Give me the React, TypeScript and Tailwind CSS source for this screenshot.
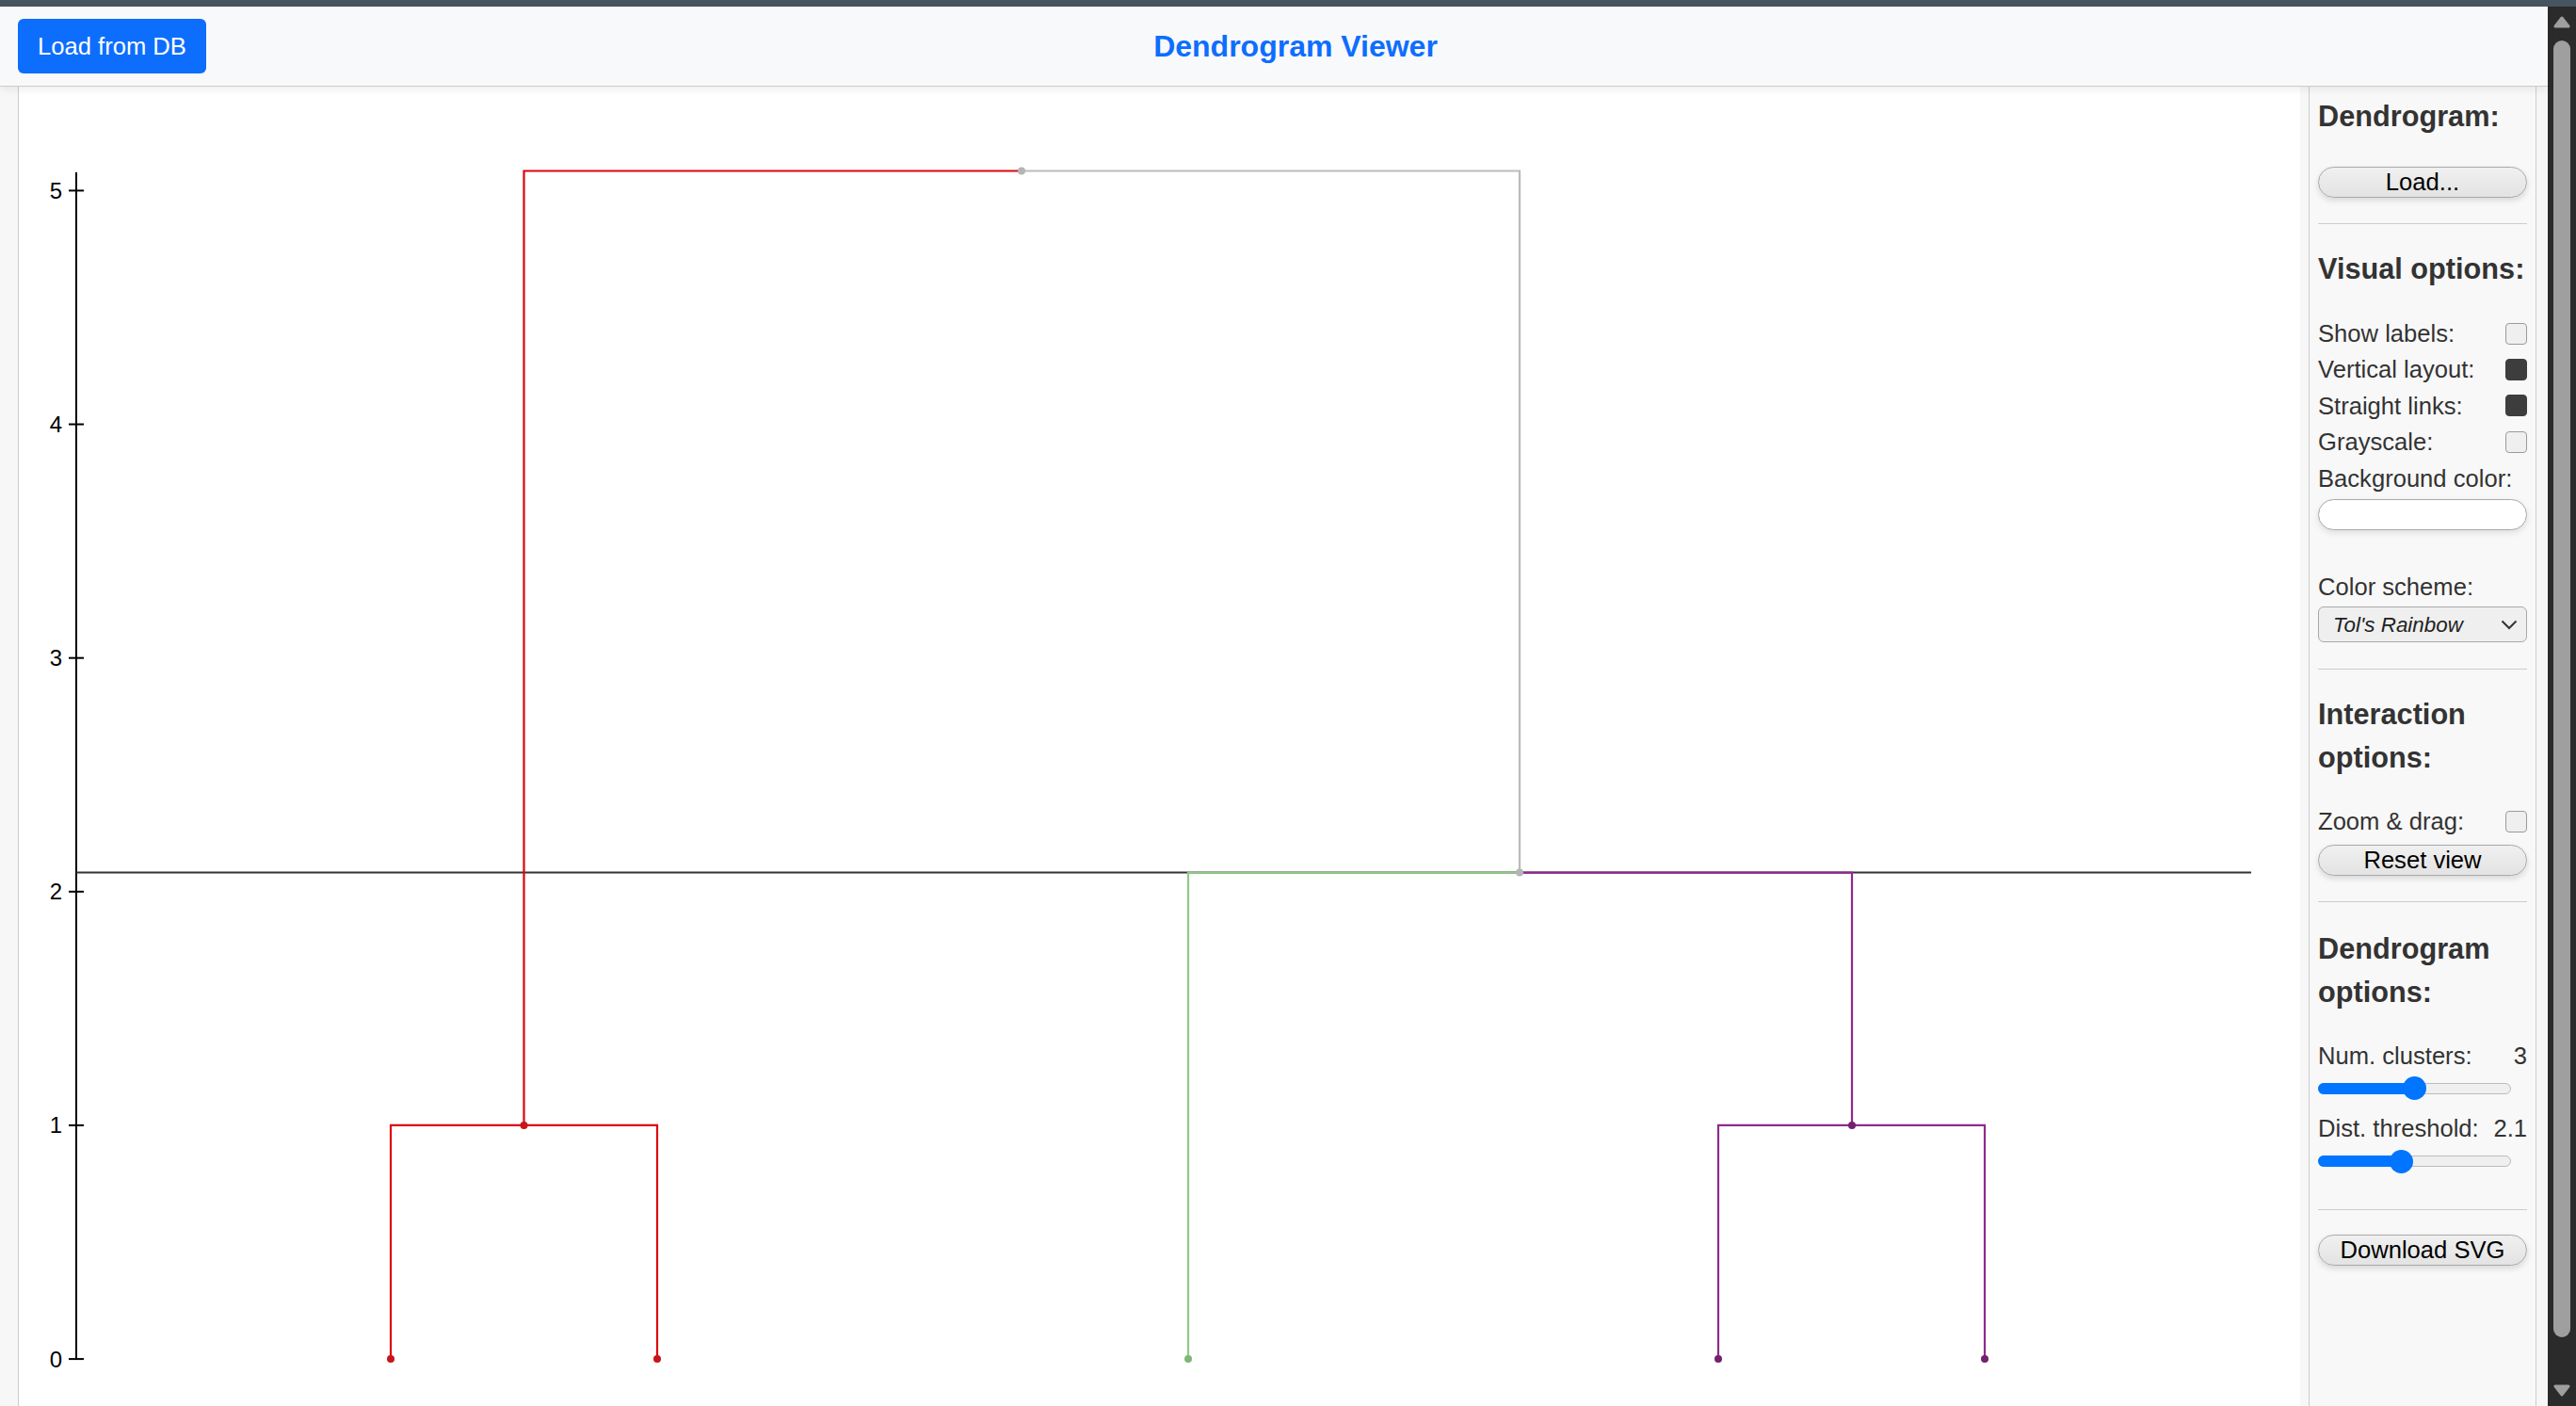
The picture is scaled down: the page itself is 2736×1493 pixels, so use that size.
// Dendrogram viewer screen: header, chart panel with a static tree and the
// options sidebar. Everything is hardcoded to the sample tree (5 leaves,
// 3 clusters, threshold 2.1).
import type { ReactNode } from 'react'

const TICKS = [0, 1, 2, 3, 4, 5]
const y = (v: number) => 1443.1 - 248.14 * v

const RED = '#dc050c'
const GREEN = '#90c987'
const PURPLE = '#8e2a8e'
const GRAY = '#bbbbbb'

function Check({ on }: { on?: boolean }) {
  return (
    <span
      className={
        on
          ? 'block h-[23px] w-[23px] rounded-[4px] border border-[#3d3d3d] bg-[#3d3d3d]'
          : 'block h-[23px] w-[23px] rounded-[4px] border border-[#9a9a9a] bg-[#efefef]'
      }
    />
  )
}

function Row({ label, children }: { label: string; children?: ReactNode }) {
  return (
    <div className="flex h-[38.4px] items-center justify-between leading-[38.4px]">
      <span>{label}</span>
      {children}
    </div>
  )
}

function Pill({ children, className }: { children: ReactNode; className: string }) {
  return (
    <button
      type="button"
      className={
        'flex h-[33px] w-full items-center justify-center rounded-full border border-[#a9a9a9] bg-gradient-to-b from-[#f0f0f0] to-[#e3e3e3] text-[25.6px] text-black shadow-[0_3px_6px_rgba(0,0,0,0.13)] ' +
        className
      }
    >
      {children}
    </button>
  )
}

function Slider({ fill, thumb }: { fill: string; thumb: string }) {
  return (
    <div className="relative h-[25px] w-[205px]">
      <div className="absolute left-0 right-0 top-[6.5px] h-[12px] rounded-full border border-[#bcbcbc] bg-[#efefef]" />
      <div className={'absolute left-0 top-[6.5px] h-[12px] rounded-full bg-[#0075ff] ' + fill} />
      <div className={'absolute top-0 h-[25px] w-[25px] rounded-full bg-[#0075ff] ' + thumb} />
    </div>
  )
}

function Sidebar() {
  return (
    <aside className="w-[242px] shrink-0 border-x border-[#cccccc] bg-[#f8f8f8] px-[9px] pt-[9px] text-[25.6px] text-[#333333]">
      <h3 className="text-[30.7px] font-bold leading-[46px]">Dendrogram:</h3>
      <Pill className="mt-[30px]">Load...</Pill>
      <hr className="mt-[27px] border-[#cccccc]" />

      <h3 className="mt-[25px] text-[30.7px] font-bold leading-[46px]">Visual options:</h3>
      <div className="mt-[26px]">
        <Row label="Show labels:">
          <Check />
        </Row>
        <Row label="Vertical layout:">
          <Check on />
        </Row>
        <Row label="Straight links:">
          <Check on />
        </Row>
        <Row label="Grayscale:">
          <Check />
        </Row>
        <Row label="Background color:" />
      </div>
      <div className="mt-[3px] h-[33px] rounded-full border border-[#a9a9a9] bg-white shadow-[0_3px_6px_rgba(0,0,0,0.1)]" />

      <div className="mt-[41px]">
        <Row label="Color scheme:" />
      </div>
      <div className="mt-[2px] flex h-[38px] items-center justify-between rounded-[6px] border border-[#a9a9a9] bg-[#efefef] pl-[15px] pr-[9px] text-[22.4px] italic text-[#222222]">
        <span>Tol's Rainbow</span>
        <svg width="18" height="11" viewBox="0 0 18 11" fill="none">
          <polyline points="1.5,1.5 9,9 16.5,1.5" stroke="#333" strokeWidth="2" />
        </svg>
      </div>
      <hr className="mt-[28px] border-[#cccccc]" />

      <h3 className="mt-[25px] text-[30.7px] font-bold leading-[46px]">
        Interaction
        <br />
        options:
      </h3>
      <div className="mt-[25px]">
        <Row label="Zoom & drag:">
          <Check />
        </Row>
      </div>
      <Pill className="mt-[5px]">Reset view</Pill>
      <hr className="mt-[27px] border-[#cccccc]" />

      <h3 className="mt-[27px] text-[30.7px] font-bold leading-[46px]">
        Dendrogram
        <br />
        options:
      </h3>
      <div className="mt-[25px]">
        <Row label="Num. clusters:">
          <span>3</span>
        </Row>
      </div>
      <div className="mt-[3px]">
        <Slider fill="w-[102px]" thumb="left-[89.5px]" />
      </div>
      <div className="mt-[11px]">
        <Row label="Dist. threshold:">
          <span>2.1</span>
        </Row>
      </div>
      <div className="mt-[3px]">
        <Slider fill="w-[88px]" thumb="left-[75.5px]" />
      </div>
      <hr className="mt-[38px] border-[#cccccc]" />
      <Pill className="mt-[26px]">Download SVG</Pill>
    </aside>
  )
}

function Chart() {
  const rootY = 181.5
  const cutY = 926.6
  const midY = y(1)
  const leafY = y(0)
  return (
    <svg className="block" width="2423" height="1401" viewBox="20 92 2423 1401">
      {/* y axis */}
      <line x1="81" y1="183" x2="81" y2={leafY} stroke="#000" strokeWidth="2" />
      {TICKS.map((t) => (
        <g key={t}>
          <line x1="73" y1={y(t)} x2="89" y2={y(t)} stroke="#000" strokeWidth="2" />
          <text
            x="66"
            y={y(t)}
            textAnchor="end"
            dominantBaseline="central"
            fontSize="24"
            fontFamily="Liberation Sans, Arial, sans-serif"
            fill="#000"
          >
            {t}
          </text>
        </g>
      ))}

      {/* threshold */}
      <line x1="81" y1={cutY} x2="2391" y2={cutY} stroke="#333" strokeWidth="2" />

      <g fill="none" strokeWidth="2.2">
        <path d={`M415 ${leafY} V${midY} H698 V${leafY}`} stroke={RED} />
        <path d={`M556.5 ${midY} V${rootY} H1085`} stroke={RED} />
        <path d={`M1085 ${rootY} H1614 V${cutY}`} stroke={GRAY} />
        <path d={`M1614 ${cutY} H1262 V${leafY}`} stroke={GREEN} />
        <path d={`M1614 ${cutY} H1967 V${midY}`} stroke={PURPLE} />
        <path d={`M1825 ${leafY} V${midY} H2108 V${leafY}`} stroke={PURPLE} />
      </g>

      <g>
        <circle cx="415" cy={leafY} r="4" fill="#c8141a" />
        <circle cx="698" cy={leafY} r="4" fill="#c8141a" />
        <circle cx="556.5" cy={midY} r="4" fill="#c8141a" />
        <circle cx="1262" cy={leafY} r="4" fill="#7fb776" />
        <circle cx="1825" cy={leafY} r="4" fill="#74206f" />
        <circle cx="2108" cy={leafY} r="4" fill="#74206f" />
        <circle cx="1967" cy={midY} r="4" fill="#74206f" />
        <circle cx="1614" cy={cutY} r="4" fill="#b5b5b5" />
        <circle cx="1085" cy={rootY} r="4" fill="#b5b5b5" />
      </g>
    </svg>
  )
}

function Scrollbar() {
  return (
    <div className="flex w-[30px] shrink-0 flex-col items-center bg-[#2b2b2b]">
      <svg className="mt-[10px]" width="18" height="13" viewBox="0 0 18 13">
        <polygon points="9,2 16,11 2,11" fill="#9f9f9f" stroke="#9f9f9f" strokeWidth="3" strokeLinejoin="round" />
      </svg>
      <div className="mt-[13px] h-[1377px] w-[18px] rounded-full bg-[#9f9f9f]" />
      <svg className="mt-[50px]" width="18" height="13" viewBox="0 0 18 13">
        <polygon points="2,2 16,2 9,11" fill="#9f9f9f" stroke="#9f9f9f" strokeWidth="3" strokeLinejoin="round" />
      </svg>
    </div>
  )
}

export default function App() {
  return (
    <div className="flex h-[1493px] w-[2736px] flex-col overflow-hidden bg-[#f7f7f7] font-['Liberation_Sans',Arial,sans-serif]">
      <div className="h-[7px] shrink-0 bg-[#455660]" />
      <div className="flex min-h-0 flex-1">
        <div className="flex min-w-0 flex-1 flex-col">
          <header className="relative z-10 grid h-[85px] shrink-0 grid-cols-[1fr_auto_1fr] items-center border-b border-[#cccccc] bg-[#f8f9fa] px-[19px] shadow-[0_3px_8px_rgba(0,0,0,0.07)]">
            <div>
              <button
                type="button"
                className="h-[58px] rounded-[6px] bg-[#0d6efd] px-[21px] text-[25.6px] text-white"
              >
                Load from DB
              </button>
            </div>
            <h1 className="ml-[46px] text-[32px] font-bold text-[#0d6efd]">Dendrogram Viewer</h1>
            <div />
          </header>

          <main className="flex min-h-0 flex-1 pl-[19px] pr-[12px]">
            <div className="min-w-0 flex-1 overflow-hidden border-l border-[#cccccc] bg-white">
              <Chart />
            </div>
            <div className="w-[9px] shrink-0" />
            <Sidebar />
          </main>
        </div>
        <Scrollbar />
      </div>
    </div>
  )
}
